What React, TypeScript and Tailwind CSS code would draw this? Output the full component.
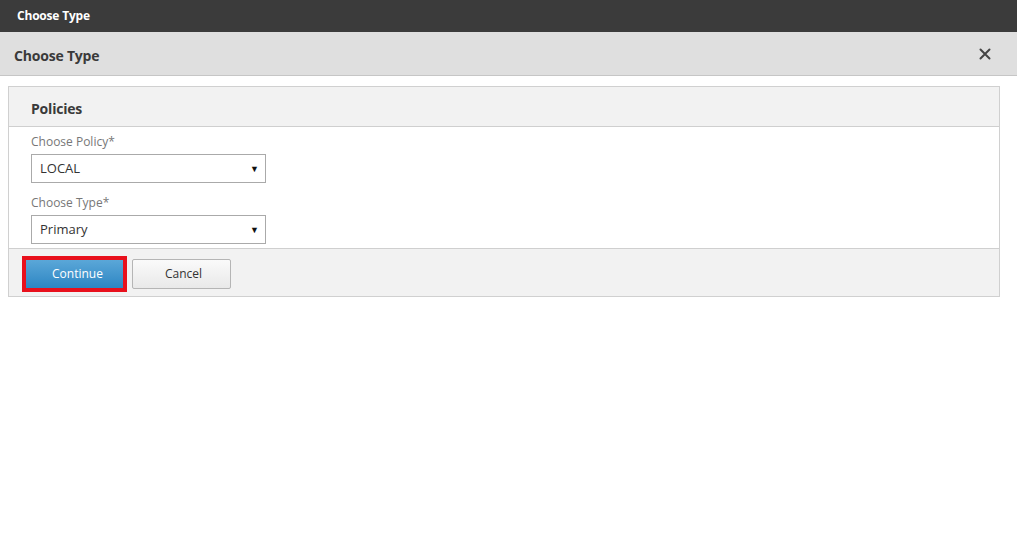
export default function App() {
  return (
    <div className="h-[544px] w-[1017px] overflow-hidden bg-white font-['Open_Sans',sans-serif] text-[#333]">
      {/* Page bar */}
      <div className="flex h-8 items-center bg-[#3b3b3b] pl-[17px]">
        <span className="text-[12px] font-bold tracking-[-0.2px] text-white">Choose Type</span>
      </div>

      {/* Dialog header */}
      <div className="flex h-[44px] items-center justify-between border-b border-[#c6c6c6] bg-[#dfdfdf] pl-[14px] pr-[26px] pt-[3px]">
        <span className="text-[14px] font-bold tracking-[-0.2px] text-[#3a3a3a]">Choose Type</span>
        <svg width="12" height="12" viewBox="0 0 12 12" className="-mt-[3px] text-[#444]">
          <path d="M1.5 1.5 L10.5 10.5 M10.5 1.5 L1.5 10.5" stroke="currentColor" strokeWidth="2" strokeLinecap="round" />
        </svg>
      </div>

      {/* Panel */}
      <div className="pl-[8px] pr-[17px] pt-[10px]">
        <div className="border border-[#d0d0d0]">
          <div className="flex h-[40px] items-center border-b border-[#cfcfcf] bg-[#f2f2f2] pl-[22px] pt-[3px]">
            <span className="text-[14px] font-bold tracking-[-0.2px] text-[#3a3a3a]">Policies</span>
          </div>

          <div className="bg-white pb-[4px] pl-[22px] pt-[7px]">
            <div className="text-[12px] leading-[16px] text-[#777]">Choose Policy*</div>
            <div className="mt-[4px] flex h-[29px] w-[235px] items-center justify-between border border-[#aaa] bg-white pl-[8px] pr-[6px]">
              <span className="text-[13px] text-[#333]">LOCAL</span>
              <span className="text-[9px] text-[#111]">▼</span>
            </div>

            <div className="mt-[12px] text-[12px] leading-[16px] text-[#777]">Choose Type*</div>
            <div className="mt-[4px] flex h-[29px] w-[235px] items-center justify-between border border-[#aaa] bg-white pl-[8px] pr-[6px]">
              <span className="text-[13px] text-[#333]">Primary</span>
              <span className="text-[9px] text-[#111]">▼</span>
            </div>
          </div>

          <div className="flex h-[48px] items-center gap-[5px] border-t border-[#cfcfcf] bg-[#f2f2f2] pl-[13px] pt-[2px]">
            <div className="border-[4px] border-[#e8101c]">
              <button className="flex h-[28px] w-[97px] items-center justify-center bg-gradient-to-b from-[#5aa7d8] to-[#2c86c3] pl-[6px] text-[12px] text-white">
                Continue
              </button>
            </div>
            <button className="flex h-[30px] w-[99px] items-center justify-center rounded-[2px] border border-[#b5b5b5] bg-gradient-to-b from-[#fafafa] to-[#e9e9e9] pl-[4px] text-[12px] text-[#333]">
              Cancel
            </button>
          </div>
        </div>
      </div>
    </div>
  );
}
